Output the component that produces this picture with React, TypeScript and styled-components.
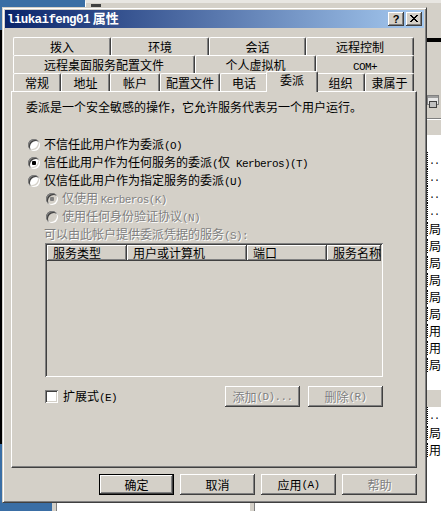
import styled, { createGlobalStyle } from "styled-components";
import type { ReactNode } from "react";

const FACE = "#d4d0c8";
const HILITE = "#ffffff";
const SHADOW = "#808080";
const DKSHADOW = "#404040";

const GlobalStyles = createGlobalStyle`
  html, body {
    margin: 0;
    padding: 0;
  }
  body {
    width: 441px;
    height: 511px;
    overflow: hidden;
    font-family: "Noto Sans CJK SC", "Noto Sans", sans-serif;
    font-size: 12px;
    color: #000;
  }
  * {
    box-sizing: border-box;
  }
`;

const Desktop = styled.div`
  position: relative;
  width: 441px;
  height: 511px;
  overflow: hidden;
  background: #3a6ea5;
`;

/* ---- windows lying behind the dialog ---- */

const LeftStrip = styled.div`
  position: absolute;
  left: 0;
  top: 30px;
  width: 4px;
  height: 414px;
  background: #000;
`;

const TopWindow = styled.div`
  position: absolute;
  left: 85px;
  top: 0;
  width: 356px;
  height: 40px;
  background: ${FACE};
  border-left: 1px solid ${HILITE};
  border-top: 3px solid #e8e6e2;
  padding: 1px 0 0 5px;
`;

const TopIcon = styled.div`
  width: 10px;
  height: 4px;
  background: ${DKSHADOW};
`;

const SidePane = styled.div`
  position: absolute;
  left: 410px;
  top: 0;
  width: 31px;
  height: 511px;
  display: flex;
  flex-direction: column;
  background: ${FACE};
`;

const SideTop = styled.div`
  flex: none;
  height: 38px;
  border-top: 3px solid #e8e6e2;
`;

const SideBlackBar = styled.div`
  flex: none;
  height: 4px;
  background: #000;
`;

const SideToolbar = styled.div`
  flex: none;
  height: 76px;
  padding: 53px 0 0 17px;
`;

const SideHeader = styled.div`
  flex: none;
  height: 17px;
  border-top: 1px solid ${SHADOW};
  box-shadow: inset 0 1px ${HILITE};
`;

const SideList = styled.div`
  flex: 1;
  background: #fff;
`;

const SideRow = styled.div<{ $band?: boolean }>`
  height: 17px;
  padding-left: 17px;
  display: flex;
  align-items: center;
  background: ${(p) => (p.$band ? FACE : "transparent")};
  white-space: nowrap;
  line-height: 14px;
`;

const SideCell = styled.span`
  border-left: 1px dotted #000;
  padding-left: 1px;
`;

const SideDots = styled.span`
  font-family: "Liberation Mono", monospace;
  font-size: 10px;
  letter-spacing: -1px;
`;

const BottomWindow = styled.div`
  position: absolute;
  left: 52px;
  top: 495px;
  width: 400px;
  height: 20px;
  display: flex;
`;

const BottomPane = styled.div<{ $w?: number }>`
  width: ${(p) => (p.$w ? `${p.$w}px` : "auto")};
  flex: ${(p) => (p.$w ? "none" : "1")};
  background: #fff;
  border-left: 4px solid ${FACE};
  box-shadow: inset 1px 0 ${SHADOW};
`;

/* ---- the dialog ---- */

const Dialog = styled.div`
  position: absolute;
  left: 2px;
  top: 7px;
  width: 425px;
  height: 496px;
  background: ${FACE};
  border: 1px solid;
  border-color: ${FACE} ${DKSHADOW} ${DKSHADOW} ${FACE};
  box-shadow: inset 1px 1px ${HILITE}, inset -1px -1px ${SHADOW};
  padding: 2px;
  display: flex;
  flex-direction: column;
`;

const TitleBar = styled.div`
  flex: none;
  height: 18px;
  background: linear-gradient(to right, #0a246a, #a6caf0);
  display: flex;
  align-items: center;
  gap: 2px;
  padding: 0 2px 0 2px;
`;

const TitleText = styled.div`
  flex: 1;
  color: #fff;
  font-weight: bold;
  font-size: 13px;
  line-height: 15px;
  white-space: nowrap;
`;

const CaptionButton = styled.div`
  flex: none;
  width: 16px;
  height: 14px;
  background: ${FACE};
  box-shadow: inset -1px -1px ${DKSHADOW}, inset 1px 1px ${HILITE},
    inset -2px -2px ${SHADOW};
  display: flex;
  align-items: center;
  justify-content: center;
  font-family: "Liberation Sans", sans-serif;
  font-weight: bold;
  font-size: 11px;
  line-height: 12px;
  padding-bottom: 1px;
`;

const Ascii = styled.span<{ $bold?: boolean }>`
  font-family: "Liberation Mono", monospace;
  font-size: ${(p) => (p.$bold ? "12.5px" : "11px")};
  letter-spacing: ${(p) => (p.$bold ? "-0.6px" : "-0.6px")};
`;

const Body = styled.div`
  display: flex;
  flex-direction: column;
  padding: 9px 7px 0 6px;
`;

const TabStrip = styled.div`
  flex: none;
  display: flex;
  flex-direction: column;
  margin: 0 3px 0 2px;
`;

const TabRow = styled.div`
  display: flex;
  align-items: flex-end;
  height: 18px;
`;

const Tab = styled.div<{ $w: number; $active?: boolean }>`
  flex: none;
  width: ${(p) => p.$w + (p.$active ? 4 : 0)}px;
  height: ${(p) => (p.$active ? 21 : 18)}px;
  margin: ${(p) => (p.$active ? "0 -2px -1px" : "0")};
  position: relative;
  z-index: ${(p) => (p.$active ? 2 : 0)};
  background: ${FACE};
  border-top: 1px solid ${HILITE};
  border-left: 1px solid ${HILITE};
  border-right: 1px solid ${DKSHADOW};
  border-radius: 2px 2px 0 0;
  box-shadow: inset -1px 0 ${SHADOW};
  text-align: center;
  line-height: ${(p) => (p.$active ? 16 : 17)}px;
  white-space: nowrap;
  overflow: hidden;
`;

const Panel = styled.div`
  flex: none;
  position: relative;
  z-index: 1;
  height: 377px;
  border: 1px solid;
  border-color: ${HILITE} ${DKSHADOW} ${DKSHADOW} ${HILITE};
  box-shadow: inset -1px -1px ${SHADOW};
  padding: 8px 0 0 14px;
  display: flex;
  flex-direction: column;
`;

const Description = styled.div`
  flex: none;
  height: 14px;
  line-height: 14px;
  white-space: nowrap;
`;

const RadioGroup = styled.div`
  flex: none;
  display: flex;
  flex-direction: column;
  margin-top: 22px;
`;

const RadioRow = styled.div<{ $indent?: number }>`
  flex: none;
  display: flex;
  align-items: center;
  gap: 4px;
  height: 18px;
  padding-left: ${(p) => 2 + (p.$indent ?? 0)}px;
  white-space: nowrap;
`;

const RadioCircle = styled.span<{ $checked?: boolean; $disabled?: boolean }>`
  flex: none;
  position: relative;
  width: 12px;
  height: 12px;
  border-radius: 50%;
  background: ${(p) => (p.$disabled ? FACE : HILITE)};
  box-shadow: inset 1px 1px ${SHADOW}, inset -1px -1px ${HILITE},
    inset 2px 2px ${DKSHADOW}, inset -2px -2px ${FACE};
  &::after {
    content: "";
    display: ${(p) => (p.$checked ? "block" : "none")};
    position: absolute;
    left: 4px;
    top: 4px;
    width: 4px;
    height: 4px;
    border-radius: 1px;
    background: ${(p) => (p.$disabled ? SHADOW : "#000")};
  }
`;

const Text = styled.span<{ $disabled?: boolean }>`
  line-height: 14px;
  color: ${(p) => (p.$disabled ? SHADOW : "#000")};
  text-shadow: ${(p) => (p.$disabled ? `1px 1px ${HILITE}` : "none")};
`;

const ServicesLabel = styled(Text)`
  flex: none;
  display: block;
  height: 16px;
  margin-left: 18px;
  line-height: 16px;
  white-space: nowrap;
`;

const ListView = styled.div`
  flex: none;
  margin: 1px 0 0 19px;
  width: 338px;
  height: 134px;
  padding: 2px;
  background: ${FACE};
  box-shadow: inset 1px 1px ${SHADOW}, inset -1px -1px ${HILITE},
    inset 2px 2px ${DKSHADOW}, inset -2px -2px ${FACE};
`;

const ListHeader = styled.div`
  display: flex;
  height: 16px;
  overflow: hidden;
`;

const HeaderCell = styled.div<{ $w?: number }>`
  flex: ${(p) => (p.$w ? "none" : "1")};
  width: ${(p) => (p.$w ? `${p.$w}px` : "auto")};
  min-width: 0;
  padding-left: 6px;
  line-height: 15px;
  white-space: nowrap;
  overflow: hidden;
  box-shadow: inset -1px -1px ${DKSHADOW}, inset 1px 1px ${HILITE},
    inset -2px -2px ${SHADOW};
`;

const OptionsRow = styled.div`
  flex: none;
  display: flex;
  align-items: center;
  margin: 9px 0 0 19px;
  width: 338px;
  height: 21px;
`;

const CheckBox = styled.span`
  flex: none;
  width: 13px;
  height: 13px;
  background: ${HILITE};
  box-shadow: inset 1px 1px ${SHADOW}, inset -1px -1px ${HILITE},
    inset 2px 2px ${DKSHADOW}, inset -2px -2px ${FACE};
  margin-right: 5px;
`;

const Spacer = styled.div`
  flex: 1;
`;

const ButtonGroup = styled.div`
  display: flex;
  gap: 8px;
`;

const Button = styled.div<{ $default?: boolean; $disabled?: boolean }>`
  flex: none;
  width: 75px;
  height: 21px;
  background: ${FACE};
  border: ${(p) => (p.$default ? "1px solid #000" : "none")};
  box-shadow: inset -1px -1px ${DKSHADOW}, inset 1px 1px ${HILITE},
    inset -2px -2px ${SHADOW};
  display: flex;
  align-items: center;
  justify-content: center;
  white-space: nowrap;
  line-height: 14px;
  color: ${(p) => (p.$disabled ? SHADOW : "#000")};
  text-shadow: ${(p) => (p.$disabled ? `1px 1px ${HILITE}` : "none")};
`;

const DialogButtons = styled.div`
  flex: none;
  display: flex;
  justify-content: flex-end;
  gap: 6px;
  margin-top: 6px;
`;

type TabDef = { label: ReactNode; w: number; active?: boolean };

const tabRows: TabDef[][] = [
  [
    { label: "拨入", w: 98 },
    { label: "环境", w: 98 },
    { label: "会话", w: 97 },
    { label: "远程控制", w: 108 },
  ],
  [
    { label: "远程桌面服务配置文件", w: 182 },
    { label: "个人虚拟机", w: 121 },
    { label: <Ascii>COM+</Ascii>, w: 98 },
  ],
  [
    { label: "常规", w: 48 },
    { label: "地址", w: 49 },
    { label: "帐户", w: 50 },
    { label: "配置文件", w: 60 },
    { label: "电话", w: 48 },
    { label: "委派", w: 48, active: true },
    { label: "组织", w: 49 },
    { label: "隶属于", w: 49 },
  ],
];

const sideRows = [
  "", "..", "..", "..", "..",
  "局", "局", "局", "局", "局", "局", "用", "用", "局",
  "", "#band", "..", "局", "用",
];

function CloseGlyph() {
  return (
    <svg width="8" height="7" viewBox="0 0 8 7">
      <path
        fill="#000"
        d="M0 0h2v1H0z M6 0h2v1H6z M1 1h2v1H1z M5 1h2v1H5z M2 2h4v1H2z M3 3h2v1H3z M2 4h4v1H2z M1 5h2v1H1z M5 5h2v1H5z M0 6h2v1H0z M6 6h2v1H6z"
      />
    </svg>
  );
}

function SideIcon() {
  return (
    <svg width="12" height="14" viewBox="0 0 12 14">
      <rect x="0.5" y="0.5" width="11" height="9" fill="#e8e8e8" stroke="#808080" />
      <rect x="1" y="1" width="10" height="2" fill="#9c9c9c" />
      <rect x="2.5" y="6.5" width="7" height="6" fill="#c0c0c0" stroke="#404040" />
    </svg>
  );
}

function Radio(props: {
  checked?: boolean;
  disabled?: boolean;
  indent?: number;
  children: ReactNode;
}) {
  return (
    <RadioRow $indent={props.indent}>
      <RadioCircle $checked={props.checked} $disabled={props.disabled} />
      <Text $disabled={props.disabled}>{props.children}</Text>
    </RadioRow>
  );
}

export default function App() {
  return (
    <>
      <GlobalStyles />
      <Desktop>
        <LeftStrip />
        <TopWindow>
          <TopIcon />
        </TopWindow>
        <SidePane>
          <SideTop />
          <SideBlackBar />
          <SideToolbar>
            <SideIcon />
          </SideToolbar>
          <SideHeader />
          <SideList>
            {sideRows.map((r, i) =>
              r === "#band" ? (
                <SideRow key={i} $band />
              ) : (
                <SideRow key={i}>
                  {r && (
                    <SideCell>
                      {r === ".." ? <SideDots>..</SideDots> : r}
                    </SideCell>
                  )}
                </SideRow>
              )
            )}
          </SideList>
        </SidePane>
        <BottomWindow>
          <BottomPane $w={198} />
          <BottomPane />
        </BottomWindow>

        <Dialog>
          <TitleBar>
            <TitleText>
              <Ascii $bold>liukaifeng01</Ascii> 属性
            </TitleText>
            <CaptionButton>?</CaptionButton>
            <CaptionButton>
              <CloseGlyph />
            </CaptionButton>
          </TitleBar>

          <Body>
            <TabStrip>
              {tabRows.map((row, i) => (
                <TabRow key={i}>
                  {row.map((t, j) => (
                    <Tab key={j} $w={t.w} $active={t.active}>
                      {t.label}
                    </Tab>
                  ))}
                </TabRow>
              ))}
            </TabStrip>

            <Panel>
              <Description>
                委派是一个安全敏感的操作，它允许服务代表另一个用户运行。
              </Description>

              <RadioGroup>
                <Radio>
                  不信任此用户作为委派<Ascii>(O)</Ascii>
                </Radio>
                <Radio checked>
                  信任此用户作为任何服务的委派<Ascii>(</Ascii>仅
                  <Ascii> Kerberos)(T)</Ascii>
                </Radio>
                <Radio>
                  仅信任此用户作为指定服务的委派<Ascii>(U)</Ascii>
                </Radio>
                <Radio checked disabled indent={18}>
                  仅使用 <Ascii>Kerberos(K)</Ascii>
                </Radio>
                <Radio disabled indent={18}>
                  使用任何身份验证协议<Ascii>(N)</Ascii>
                </Radio>
              </RadioGroup>

              <ServicesLabel $disabled>
                可以由此帐户提供委派凭据的服务<Ascii>(S):</Ascii>
              </ServicesLabel>

              <ListView>
                <ListHeader>
                  <HeaderCell $w={80}>服务类型</HeaderCell>
                  <HeaderCell $w={120}>用户或计算机</HeaderCell>
                  <HeaderCell $w={80}>端口</HeaderCell>
                  <HeaderCell>服务名称</HeaderCell>
                </ListHeader>
              </ListView>

              <OptionsRow>
                <CheckBox />
                <Text>
                  扩展式<Ascii>(E)</Ascii>
                </Text>
                <Spacer />
                <ButtonGroup>
                  <Button $disabled>
                    添加<Ascii>(D)...</Ascii>
                  </Button>
                  <Button $disabled>
                    删除<Ascii>(R)</Ascii>
                  </Button>
                </ButtonGroup>
              </OptionsRow>
            </Panel>

            <DialogButtons>
              <Button $default>确定</Button>
              <Button>取消</Button>
              <Button>
                应用<Ascii>(A)</Ascii>
              </Button>
              <Button $disabled>帮助</Button>
            </DialogButtons>
          </Body>
        </Dialog>
      </Desktop>
    </>
  );
}
